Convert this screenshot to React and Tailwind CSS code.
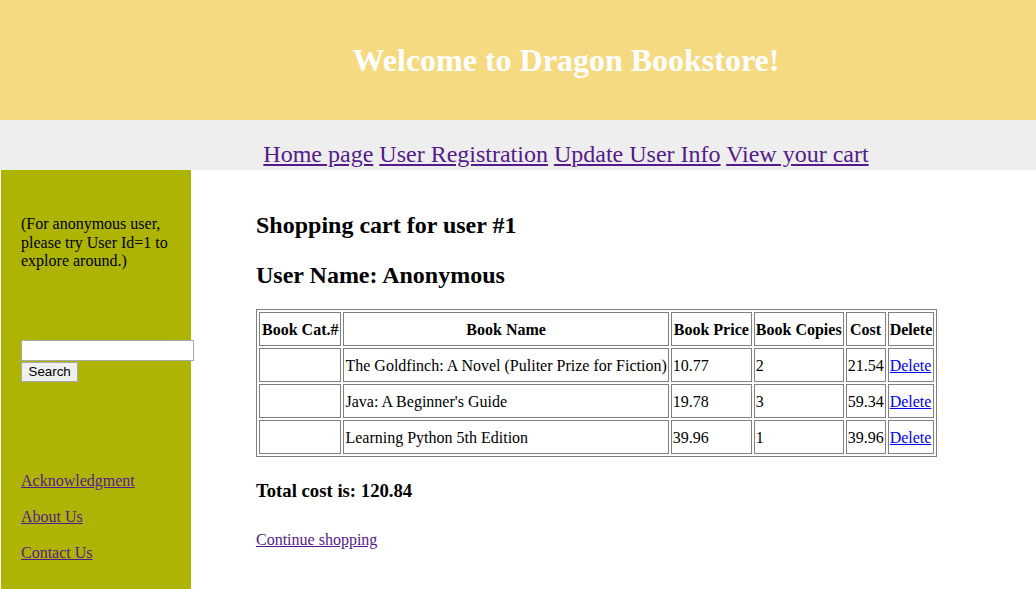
export default function App() {
  const rows = [
    ["", "The Goldfinch: A Novel (Puliter Prize for Fiction)", "10.77", "2", "21.54"],
    ["", "Java: A Beginner's Guide", "19.78", "3", "59.34"],
    ["", "Learning Python 5th Edition", "39.96", "1", "39.96"],
  ];
  const th = "border border-[#808080] font-bold text-center px-[1px] pt-[8px] pb-[6px] leading-[18px]";
  const thw = "border border-[#808080] font-bold text-center px-[2px] pt-[8px] pb-[6px] leading-[18px]";
  const td = "border border-[#808080] text-left px-[1px] pt-[8px] pb-[6px] leading-[18px]";
  return (
    <div className="w-[1036px] h-[589px] overflow-hidden bg-white text-black" style={{ fontFamily: '"Liberation Serif", "Times New Roman", serif' }}>
      <div className="h-[120px] bg-[#F5DA81] flex items-center justify-center pl-[96px]">
        <h1 className="text-[32px] font-bold text-white leading-none">Welcome to Dragon Bookstore!</h1>
      </div>
      <div className="h-[50px] bg-[#EEEEEE] flex items-end justify-center pl-[96px] pb-[2px]">
        <div className="text-[24px] leading-[28px] text-[#551A8B]">
          <a href="#" className="underline">Home page</a>{" "}
          <a href="#" className="underline">User Registration</a>{" "}
          <a href="#" className="underline">Update User Info</a>{" "}
          <a href="#" className="underline">View your cart</a>
        </div>
      </div>
      <div className="flex h-[419px]">
        <div className="ml-[1px] w-[190px] shrink-0 bg-[#AEB404] pl-[20px] pt-[45px] text-[16px] leading-[18.5px]">
          <p className="w-[160px]">(For anonymous user, please try User Id=1 to explore around.)</p>
          <div className="mt-[69px]">
            <input type="text" className="block w-[173px] h-[21px] bg-white border border-[#A9A9A9] relative z-10" />
            <button className="mt-[1px] block h-[20px] px-[6.5px] text-[13.33px] bg-[#EFEFEF] border border-[#A9A9A9] text-black" style={{ fontFamily: '"Liberation Sans", Arial, sans-serif' }}>Search</button>
          </div>
          <div className="mt-[90px] flex flex-col gap-[18px] text-[16px] leading-[18px] text-[#551A8B]">
            <a href="#" className="underline">Acknowledgment</a>
            <a href="#" className="underline">About Us</a>
            <a href="#" className="underline">Contact Us</a>
          </div>
        </div>
        <div className="pl-[65px] pt-[41px]">
          <h2 className="text-[24px] font-bold leading-[28px]">Shopping cart for user #1</h2>
          <h2 className="mt-[22px] text-[24px] font-bold leading-[28px]">User Name: Anonymous</h2>
          <table className="mt-[20px] border border-[#808080] border-separate border-spacing-[2px] text-[16px]">
            <thead>
              <tr>
                <th className={thw}>Book Cat.#</th>
                <th className={th}>Book Name</th>
                <th className={thw}>Book Price</th>
                <th className={th}>Book Copies</th>
                <th className={th}>Cost</th>
                <th className={th}>Delete</th>
              </tr>
            </thead>
            <tbody>
              {rows.map((r, i) => (
                <tr key={i}>
                  {r.map((c, j) => (
                    <td key={j} className={td}>{c}</td>
                  ))}
                  <td className={td}>
                    <a href="#" className="underline text-[#0000EE]">Delete</a>
                  </td>
                </tr>
              ))}
            </tbody>
          </table>
          <p className="mt-[23px] text-[18.72px] font-bold leading-[22px]">Total cost is: 120.84</p>
          <p className="mt-[29px] text-[16px] leading-[18px]">
            <a href="#" className="underline text-[#551A8B]">Continue shopping</a>
          </p>
        </div>
      </div>
    </div>
  );
}
